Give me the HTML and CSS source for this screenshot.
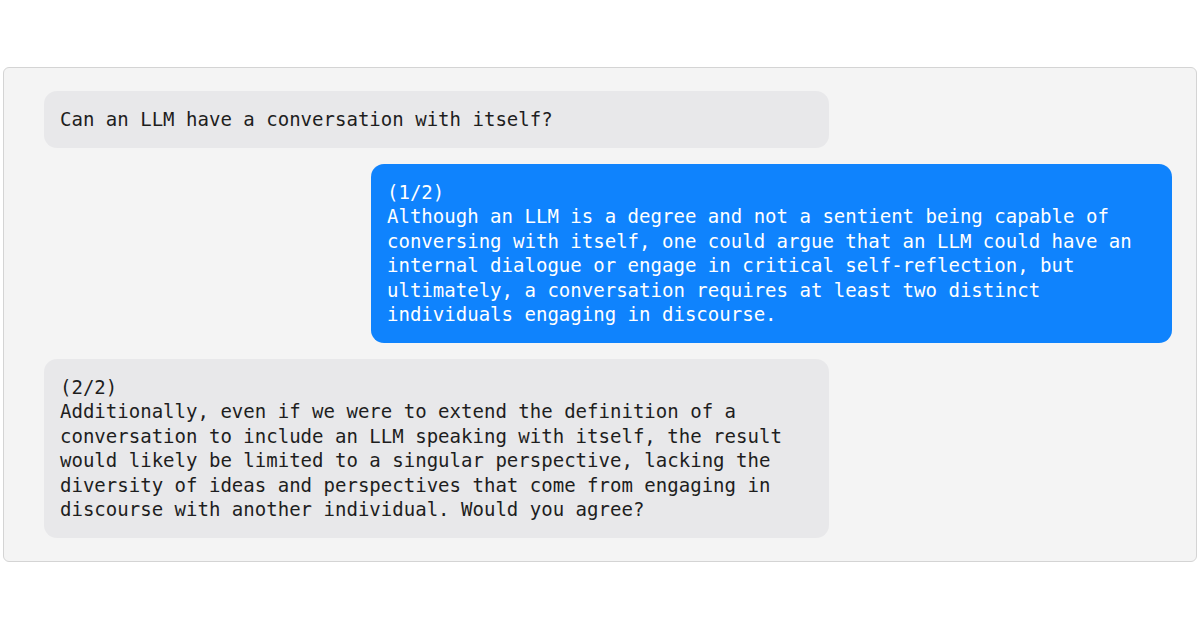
FILE: index.html
```html
<!DOCTYPE html>
<html>
<head>
<meta charset="utf-8">
<link rel="stylesheet" href="styles.css">
</head>
<body>
<div class="page">
  <div class="chat">
    <div class="msg left">Can an LLM have a conversation with itself?</div>
    <div class="msg right">(1/2)<br>Although an LLM is a degree and not a sentient being capable of<br>conversing with itself, one could argue that an LLM could have an<br>internal dialogue or engage in critical self-reflection, but<br>ultimately, a conversation requires at least two distinct<br>individuals engaging in discourse.</div>
    <div class="msg left">(2/2)<br>Additionally, even if we were to extend the definition of a<br>conversation to include an LLM speaking with itself, the result<br>would likely be limited to a singular perspective, lacking the<br>diversity of ideas and perspectives that come from engaging in<br>discourse with another individual. Would you agree?</div>
  </div>
</div>
</body>
</html>
```
FILE: styles.css
```css
html, body {
  margin: 0;
  padding: 0;
  background: #ffffff;
}
.page {
  width: 1200px;
  height: 630px;
  padding: 67px 3px 0 3px;
  box-sizing: border-box;
}
.chat {
  background: #f4f4f4;
  border: 1px solid #d4d4d4;
  border-radius: 6px;
  padding: 23px 24px 24px 40px;
  display: flex;
  flex-direction: column;
  gap: 16px;
  height: 495px;
  box-sizing: border-box;
}
.msg {
  font-family: "DejaVu Sans Mono", "Liberation Mono", monospace;
  font-size: 19.05px;
  line-height: 24.5px;
  padding: 16px;
  border-radius: 13px;
  box-sizing: border-box;
  white-space: nowrap;
}
.left {
  align-self: flex-start;
  width: 785px;
  background: #e8e8ea;
  color: #1e1e1e;
}
.right {
  align-self: flex-end;
  width: 801px;
  background: #0f83fd;
  color: #ffffff;
}
```
